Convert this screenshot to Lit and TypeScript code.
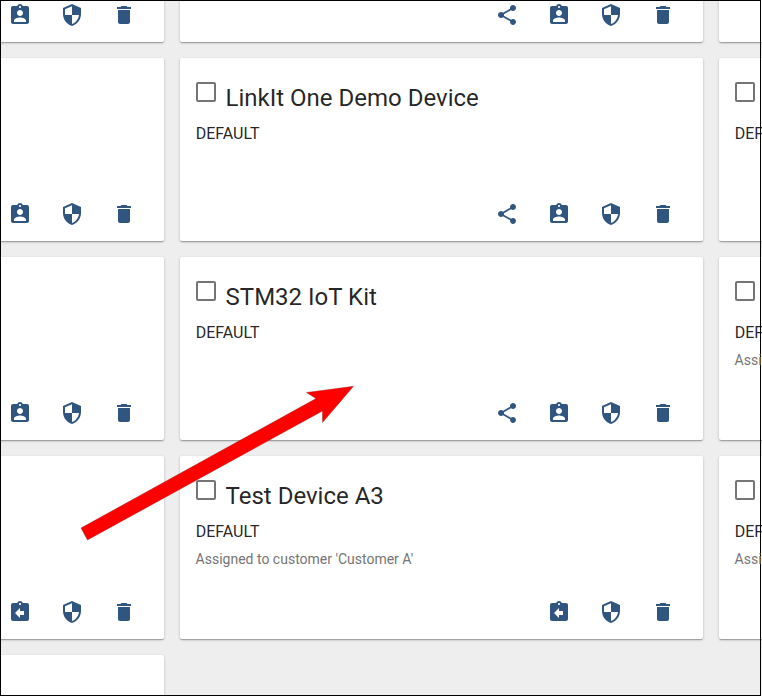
import { LitElement, html, css, svg, nothing } from "lit";
import { customElement, property } from "lit/decorators.js";

const ICONS: Record<string, string> = {
  share: "M18 16.08c-.76 0-1.44.3-1.96.77L8.91 12.7c.05-.23.09-.46.09-.7s-.04-.47-.09-.7l7.05-4.11c.54.5 1.25.81 2.04.81 1.66 0 3-1.34 3-3s-1.34-3-3-3-3 1.34-3 3c0 .24.04.47.09.7L8.04 9.81C7.5 9.31 6.79 9 6 9c-1.66 0-3 1.34-3 3s1.34 3 3 3c.79 0 1.5-.31 2.04-.81l7.12 4.16c-.05.21-.08.43-.08.65 0 1.61 1.31 2.92 2.92 2.92 1.61 0 2.92-1.31 2.92-2.92s-1.31-2.92-2.92-2.92z",
  assign: "M19 3h-4.18C14.4 1.84 13.3 1 12 1c-1.3 0-2.4.84-2.82 2H5c-1.1 0-2 .9-2 2v14c0 1.1.9 2 2 2h14c1.1 0 2-.9 2-2V5c0-1.1-.9-2-2-2zm-7 0c.55 0 1 .45 1 1s-.45 1-1 1-1-.45-1-1 .45-1 1-1zm0 4c1.66 0 3 1.34 3 3s-1.34 3-3 3-3-1.34-3-3 1.34-3 3-3zm6 12H6v-1.4c0-2 4-3.1 6-3.1s6 1.1 6 3.1V19z",
  unassign: "M19 3h-4.18C14.4 1.84 13.3 1 12 1c-1.3 0-2.4.84-2.82 2H5c-1.1 0-2 .9-2 2v14c0 1.1.9 2 2 2h14c1.1 0 2-.9 2-2V5c0-1.1-.9-2-2-2zm-7 0c.55 0 1 .45 1 1s-.45 1-1 1-1-.45-1-1 .45-1 1-1zm4 12h-4v3l-5-5 5-5v3h4v4z",
  security: "M12 1L3 5v6c0 5.55 3.84 10.74 9 12 5.16-1.26 9-6.45 9-12V5l-9-4zm0 10.99h7c-.53 4.12-3.28 7.79-7 8.94V12H5V6.3l7-3.11v8.8z",
  delete: "M6 19c0 1.1.9 2 2 2h8c1.1 0 2-.9 2-2V7H6v12zM19 4h-3.5l-1-1h-5l-1 1H5v2h14V4z",
};

interface Device {
  name?: string;
  customer?: string;
  actions: string[];
}

const OPEN = ["share", "assign", "security", "delete"];
const PRIVATE = ["unassign", "security", "delete"];

const DEVICES: Device[] = [
  { actions: OPEN }, { actions: OPEN }, { actions: OPEN },
  { actions: OPEN }, { name: "LinkIt One Demo Device", actions: OPEN }, { name: " ", actions: OPEN },
  { actions: OPEN }, { name: "STM32 IoT Kit", actions: OPEN }, { name: " ", customer: "Customer A", actions: PRIVATE },
  { actions: PRIVATE }, { name: "Test Device A3", customer: "Customer A", actions: PRIVATE }, { name: " ", customer: "Customer A", actions: PRIVATE },
  { actions: OPEN },
];

@customElement("device-card")
export class DeviceCard extends LitElement {
  @property({ attribute: false }) device!: Device;

  static styles = css`
    :host {
      display: flex;
      flex-direction: column;
      box-sizing: border-box;
      height: 183px;
      background: #fff;
      border-radius: 2px;
      box-shadow: 0 1px 3px 0 rgba(0, 0, 0, 0.2), 0 1px 1px 0 rgba(0, 0, 0, 0.14),
        0 2px 1px -1px rgba(0, 0, 0, 0.12);
      color: rgba(0, 0, 0, 0.87);
      white-space: nowrap;
    }
    .head {
      display: flex;
      gap: 9.6px;
      height: 32px;
      padding: 24px 16px 0;
    }
    .check {
      box-sizing: border-box;
      width: 20px;
      height: 20px;
      flex: none;
      border: 2px solid rgba(0, 0, 0, 0.54);
      border-radius: 2px;
    }
    .name {
      font-size: 24px;
      line-height: 32px;
    }
    .type {
      padding: 10px 15.7px 0;
      font-size: 16px;
      line-height: 20px;
    }
    .owner {
      padding: 8px 15.6px 0;
      font-size: 14px;
      line-height: 18px;
      color: rgba(0, 0, 0, 0.54);
    }
    .type,
    .owner {
      position: relative;
      z-index: 2;
    }
    .owner {
      color: #757575;
    }
    .actions {
      display: flex;
      justify-content: flex-end;
      gap: 28px;
      margin-top: auto;
      padding: 0 28px 15px;
    }
    .icon {
      display: block;
      width: 24px;
      height: 24px;
      fill: #305680;
    }
  `;

  render() {
    const { name, customer, actions } = this.device;
    return html`
      ${name
        ? html`<div class="head"><span class="check"></span><span class="name">${name}</span></div>
            <div class="type">DEFAULT</div>
            ${customer ? html`<div class="owner">Assigned to customer '${customer}'</div>` : nothing}`
        : nothing}
      <div class="actions">
        ${actions.map((a) => html`<svg class="icon" viewBox="0 0 24 24">${svg`<path d=${ICONS[a]}></path>`}</svg>`)}
      </div>
    `;
  }
}

@customElement("app-root")
export class AppRoot extends LitElement {
  static styles = css`
    :host {
      display: block;
      position: relative;
      width: 762px;
      height: 696px;
      overflow: hidden;
      background: #eee;
      font-family: Roboto, sans-serif;
    }
    .grid {
      display: grid;
      grid-template-columns: repeat(3, 523px);
      gap: 16px;
      margin: -141px 0 0 -359px;
    }
    .frame {
      position: absolute;
      z-index: 1;
      inset: 0 1px 0 0;
      border: 1px solid #000;
    }
    .arrow {
      position: absolute;
      z-index: 3;
      inset: 0;
      width: 762px;
      height: 696px;
    }
  `;

  render() {
    return html`
      <div class="grid">${DEVICES.map((d) => html`<device-card .device=${d}></device-card>`)}</div>
      <div class="frame"></div>
      <svg class="arrow" viewBox="0 0 762 696">
        <path fill="#f00" stroke="#8a2020" stroke-width="0.4"
          d="M81 528 L316 398.5 L306.500 392.500 L353.500 386.300 L322.500 422.500 L322.500 411 L87.500 540 Z"></path>
      </svg>
    `;
  }
}
